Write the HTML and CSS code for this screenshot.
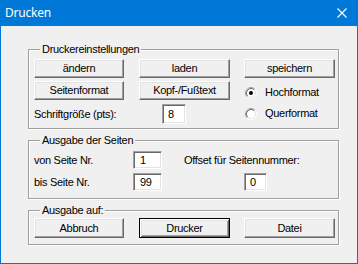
FILE: index.html
```html
<!DOCTYPE html>
<html lang="de">
<head>
<meta charset="utf-8">
<title>Drucken</title>
<link rel="stylesheet" href="styles.css">
</head>
<body>
<div class="window">
  <div class="titlebar">
    <span class="title">Drucken</span>
    <svg class="close" width="10" height="10" viewBox="0 0 10 10"><path d="M0.5 0.5 L9.5 9.5 M9.5 0.5 L0.5 9.5" stroke="#fff" stroke-width="1.1" fill="none"/></svg>
  </div>
  <div class="client">
    <div class="group g1">
      <div class="legend">Druckereinstellungen</div>
      <div class="grid3">
        <button class="btn c1">ändern</button>
        <button class="btn c3">laden</button>
        <button class="btn c5">speichern</button>
        <button class="btn c1">Seitenformat</button>
        <button class="btn c3">Kopf-/Fußtext</button>
        <label class="radio c5 r2">
          <svg class="rb" width="12" height="12" viewBox="0 0 12 12">
            <circle cx="6" cy="6" r="5" fill="#fff"/>
            <path d="M2.11 9.89 A5.5 5.5 0 0 1 9.89 2.11" stroke="#a0a0a0" fill="none"/>
            <path d="M9.89 2.11 A5.5 5.5 0 0 1 2.11 9.89" stroke="#fff" fill="none"/>
            <path d="M2.82 9.18 A4.5 4.5 0 0 1 9.18 2.82" stroke="#696969" fill="none"/>
            <path d="M9.18 2.82 A4.5 4.5 0 0 1 2.82 9.18" stroke="#e3e3e3" fill="none"/>
            <circle cx="6" cy="6" r="2" fill="#000"/>
          </svg>
          <span>Hochformat</span>
        </label>
        <div class="fontrow">
          <span class="lbl-font">Schriftgröße (pts):</span>
          <span class="edit w24">8</span>
        </div>
        <label class="radio c5 r3">
          <svg class="rb" width="12" height="12" viewBox="0 0 12 12">
            <circle cx="6" cy="6" r="5" fill="#fff"/>
            <path d="M2.11 9.89 A5.5 5.5 0 0 1 9.89 2.11" stroke="#a0a0a0" fill="none"/>
            <path d="M9.89 2.11 A5.5 5.5 0 0 1 2.11 9.89" stroke="#fff" fill="none"/>
            <path d="M2.82 9.18 A4.5 4.5 0 0 1 9.18 2.82" stroke="#696969" fill="none"/>
            <path d="M9.18 2.82 A4.5 4.5 0 0 1 2.82 9.18" stroke="#e3e3e3" fill="none"/>
          </svg>
          <span>Querformat</span>
        </label>
      </div>
    </div>

    <div class="group g2">
      <div class="legend">Ausgabe der Seiten</div>
      <div class="pages">
        <span class="plabel">von Seite Nr.</span>
        <span class="edit p-in">1</span>
        <span class="offset">Offset für Seitennummer:</span>
        <span class="plabel r2">bis Seite Nr.</span>
        <span class="edit p-in r2">99</span>
        <span class="edit o-in">0</span>
      </div>
    </div>

    <div class="group g3">
      <div class="legend">Ausgabe auf:</div>
      <div class="grid3 out">
        <button class="btn c1">Abbruch</button>
        <button class="btn default c3">Drucker</button>
        <button class="btn c5">Datei</button>
      </div>
    </div>
  </div>
</div>
</body>
</html>
```
FILE: styles.css
```css
* { box-sizing: border-box; }
html, body { margin: 0; padding: 0; background: #ffffff; }
body {
  font-family: "Liberation Sans", Arial, sans-serif;
  font-size: 11px;
  letter-spacing: -0.3px;
  color: #000;
}
.window {
  width: 358px;
  height: 264px;
  background: #f0f0f0;
  border: 1px solid #0078d7;
  border-top: 0;
  display: flex;
  flex-direction: column;
}
.titlebar {
  height: 26px;
  margin: 0 -1px;
  background: #0078d7;
  color: #fff;
  display: flex;
  align-items: center;
  justify-content: space-between;
  padding: 0 11px 0 5px;
  flex: none;
}
.title {
  font-family: "Noto Sans", "Open Sans", sans-serif;
  font-size: 12px;
  letter-spacing: -0.2px;
  line-height: 16px;
}
.close { display: block; }
.client {
  padding: 23px 0 0 27px;
  display: flex;
  flex-direction: column;
  gap: 11px;
}
.group {
  width: 311px;
  border: 1px solid #a0a0a0;
  box-shadow: inset 1px 1px 0 #fff, 1px 1px 0 #fff;
  display: flex;
  flex-direction: column;
  align-items: flex-start;
  padding: 0 0 0 5px;
}
.legend {
  margin: -7px 0 0 6px;
  padding: 0 2px 0 2px;
  line-height: 13px;
  height: 13px;
  background: #f0f0f0;
  white-space: nowrap;
}
.g1 { height: 80px; }
.g2 { height: 59px; }
.g3 { height: 35px; }

.grid3 {
  display: grid;
  grid-template-columns: 90px 15px 91px 14px 91px;
  grid-template-rows: 19px 19px 21px;
  row-gap: 3px;
  margin-top: 3px;
}
.grid3.out { grid-template-rows: 20px; margin-top: 1px; }
.c1 { grid-column: 1; }
.c3 { grid-column: 3; }
.c5 { grid-column: 5; }
.r2 { grid-row: 2; }
.r3 { grid-row: 3; }

.btn {
  font: inherit;
  letter-spacing: inherit;
  color: #000;
  margin: 0;
  padding: 0;
  background: #f0f0f0;
  border: 1px solid;
  border-color: #fff #696969 #696969 #fff;
  box-shadow: inset -1px -1px 0 #a0a0a0, inset 1px 1px 0 #e3e3e3;
  line-height: 15px;
  text-align: center;
  white-space: nowrap;
}
.btn.default {
  border-color: #000;
  box-shadow: inset 1px 1px 0 #fff, inset -1px -1px 0 #696969, inset 2px 2px 0 #e3e3e3, inset -2px -2px 0 #a0a0a0;
}

.radio {
  display: flex;
  align-items: center;
  gap: 8px;
  height: 13px;
  line-height: 13px;
  padding-left: 1px;
}
.radio.r2 { align-self: end; margin-bottom: 1px; }
.radio.r3 { align-self: center; }
.rb { display: block; flex: none; }

.fontrow {
  grid-column: 1 / 4;
  grid-row: 3;
  display: flex;
  align-items: center;
}
.lbl-font { width: 128px; }

.edit {
  display: flex;
  align-items: center;
  background: #fff;
  border: 1px solid;
  border-color: #a0a0a0 #fff #fff #a0a0a0;
  box-shadow: inset 1px 1px 0 #696969, inset -1px -1px 0 #e3e3e3;
  padding-left: 5px;
}
.w24 { width: 24px; height: 20px; }

.pages {
  display: grid;
  grid-template-columns: 99px 29px 22px 60px 23px 1fr;
  grid-template-rows: 18px 18px;
  row-gap: 4px;
  margin-top: 4px;
  width: 305px;
}
.plabel { grid-column: 1; display: flex; align-items: center; }
.p-in { grid-column: 2; padding-left: 6px; }
.offset { grid-column: 4 / 7; grid-row: 1; display: flex; align-items: center; }
.o-in { grid-column: 5; grid-row: 2; }
.pages .r2 { grid-row: 2; }
```
